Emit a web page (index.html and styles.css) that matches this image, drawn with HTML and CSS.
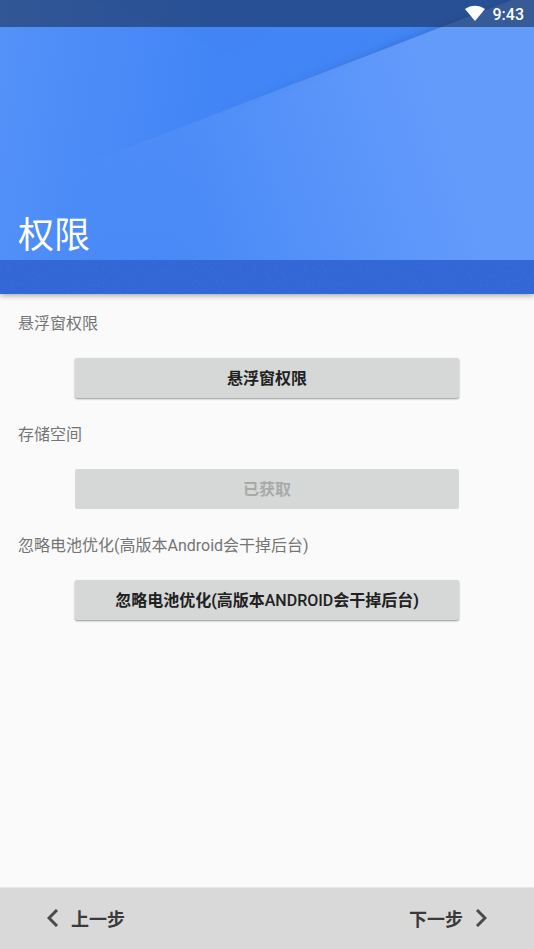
FILE: index.html
```html
<!DOCTYPE html>
<html lang="zh-CN">
<head>
    <meta charset="utf-8">
    <meta name="viewport" content="width=device-width, initial-scale=1">
    <title>权限</title>
    <link rel="stylesheet" href="styles.css">
</head>
<body>
    <header class="header">
        <svg class="header-art" viewBox="0 0 534 260" preserveAspectRatio="none" aria-hidden="true">
            <defs>
                <linearGradient id="left" gradientUnits="userSpaceOnUse" x1="-10" y1="20" x2="215" y2="54">
                    <stop offset="0" stop-color="#5592f9"/>
                    <stop offset="1" stop-color="#4285f6"/>
                </linearGradient>
                <linearGradient id="right" gradientUnits="userSpaceOnUse" x1="80" y1="190" x2="425" y2="72">
                    <stop offset="0" stop-color="#639bfb" stop-opacity="0"/>
                    <stop offset="1" stop-color="#639bfb"/>
                </linearGradient>
                <linearGradient id="edge" gradientUnits="userSpaceOnUse" x1="220" y1="0" x2="400" y2="0">
                    <stop offset="0" stop-color="#2b5fb8" stop-opacity="0"/>
                    <stop offset="1" stop-color="#2b5fb8" stop-opacity="0.6"/>
                </linearGradient>
                <filter id="soft" x="-10%" y="-10%" width="120%" height="120%">
                    <feGaussianBlur stdDeviation="3"/>
                </filter>
            </defs>
            <rect width="534" height="260" fill="url(#left)"/>
            <path d="M95 0L235 56L300 0Z" fill="#4285f6" opacity="0.3"/>
            <path d="M220 113L520 -3" stroke="url(#edge)" stroke-width="4" filter="url(#soft)"/>
            <path d="M0 197L512 0H534V260H0Z" fill="url(#right)"/>
        </svg>
        <div class="status-bar">
            <svg class="wifi" viewBox="0 0 20 16" aria-hidden="true">
                <path d="M0 4C5.500 -0.500 14.500 -0.500 20 4L10 16Z" fill="#fff"/>
            </svg>
            <span>9:43</span>
        </div>
        <h1 class="title">权限</h1>
        <div class="strip">
            <svg class="grain" aria-hidden="true">
                <filter id="noise" x="0" y="0" width="100%" height="100%">
                    <feTurbulence type="fractalNoise" baseFrequency="0.4" numOctaves="2"/>
                    <feColorMatrix values="0 0 0 0 1  0 0 0 0 1  0 0 0 0 1  0.6 0 0 0 -0.3"/>
                </filter>
                <rect width="100%" height="100%" filter="url(#noise)"/>
            </svg>
        </div>
    </header>

    <main class="content">
        <section class="item">
            <p class="label" id="overlay">悬浮窗权限</p>
            <button type="button" class="btn" aria-describedby="overlay">悬浮窗权限</button>
        </section>
        <section class="item">
            <p class="label" id="storage">存储空间</p>
            <button type="button" class="btn" aria-describedby="storage" disabled>已获取</button>
        </section>
        <section class="item">
            <p class="label" id="battery">忽略电池优化(高版本Android会干掉后台)</p>
            <button type="button" class="btn" aria-describedby="battery">忽略电池优化(高版本<span class="latin">ANDROID</span>会干掉后台)</button>
        </section>
    </main>

    <footer class="nav">
        <button type="button" class="nav-btn">
            <svg class="chevron" viewBox="0 0 12 18" aria-hidden="true"><path d="M10 1L2 9L10 17"/></svg>
            上一步
        </button>
        <button type="button" class="nav-btn">
            下一步
            <svg class="chevron" viewBox="0 0 12 18" aria-hidden="true"><path d="M2 1L10 9L2 17"/></svg>
        </button>
    </footer>
</body>
</html>
```
FILE: styles.css
```css
body {
    display: flex;
    flex-direction: column;
    min-height: 100vh;
    margin: 0;
    font-family: Roboto, "Noto Sans CJK SC", sans-serif;
    background-color: #fafafa;
}
button {
    border: none;
    font-family: inherit;
    cursor: pointer;
}

/* header */
.header {
    position: relative;
    color: white;
    box-shadow: 0 1px 6px rgba(0, 0, 0, 0.4);
}
.header-art {
    position: absolute;
    top: 0;
    left: 0;
    width: 100%;
    height: 260px;
}
.status-bar {
    position: relative;
    display: flex;
    box-sizing: border-box;
    align-items: center;
    justify-content: flex-end;
    gap: 8px;
    height: 27px;
    padding: 1px 10px 0;
    font-size: 16px;
    font-weight: 500;
    background-color: rgba(20, 38, 70, 0.55);
}
.wifi {
    width: 20px;
    height: 16px;
    margin-bottom: 2px;
}
.title {
    position: relative;
    margin: 0;
    padding: 185px 18px 0;
    font-size: 36px;
    font-weight: 400;
    line-height: 48px;
}
.strip {
    position: relative;
    height: 34px;
    background-color: #3367d6;
}
.grain {
    display: block;
    width: 100%;
    height: 100%;
    opacity: 0.15;
}

/* permission list */
.content {
    display: flex;
    flex: 1;
    flex-direction: column;
    gap: 25px;
    padding: 18px 18px;
}
.item {
    display: flex;
    flex-direction: column;
    gap: 22px;
}
.label {
    margin: 0;
    font-size: 16px;
    line-height: 24px;
    color: #757575;
}
.btn {
    height: 40px;
    margin: 0 57px;
    padding: 0 8px 2px;
    border-radius: 2px;
    font-size: 16px;
    font-weight: 700;
    color: #212121;
    background-color: #d6d8d7;
    box-shadow: 0 1px 2px rgba(0, 0, 0, 0.4);
}
.btn:disabled {
    color: #a8aaa9;
    box-shadow: none;
    cursor: default;
}
.latin {
    font-weight: 500;
}

/* bottom bar */
.nav {
    display: flex;
    justify-content: space-between;
    height: 61px;
    padding: 0 47px;
    background-color: #d9d9d9;
    border-top: 1px solid #e8e8e8;
}
.nav-btn {
    display: flex;
    align-items: center;
    gap: 12px;
    padding: 0 0 2px;
    font-size: 18px;
    font-weight: 700;
    color: #3a3a3a;
    background: none;
}
.chevron {
    width: 12px;
    height: 18px;
    fill: none;
    stroke: #4a4a4a;
    stroke-width: 3;
}
```
